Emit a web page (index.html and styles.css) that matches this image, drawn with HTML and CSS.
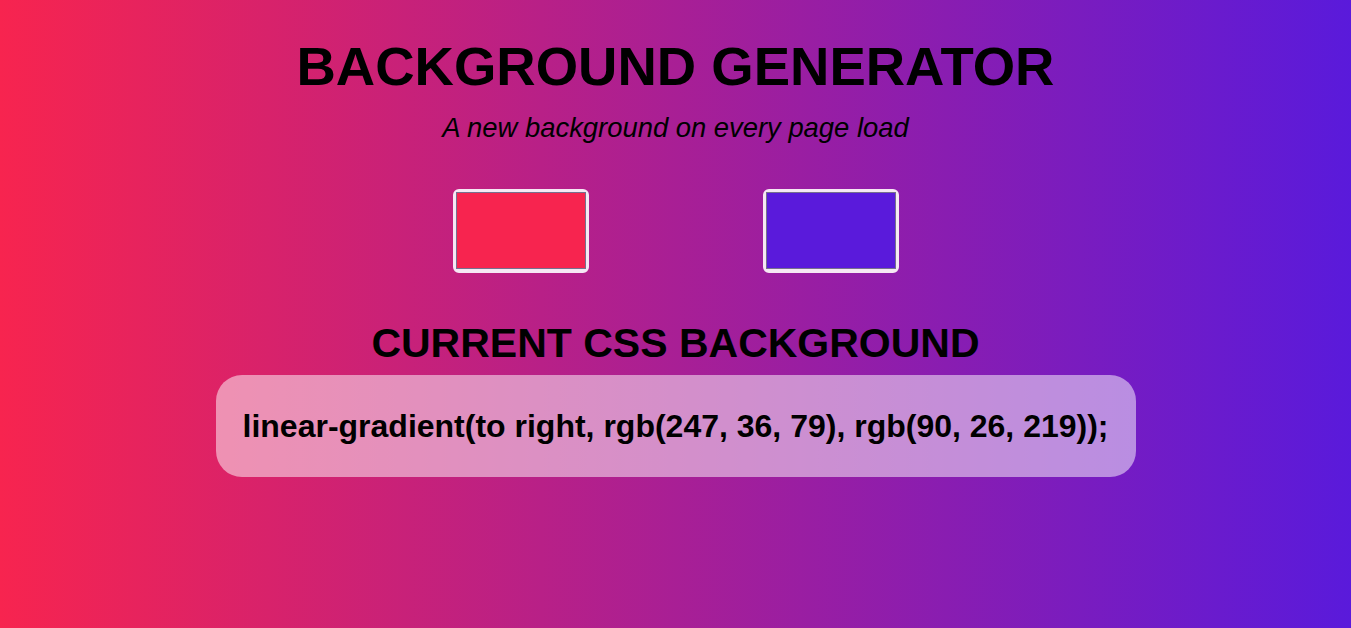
FILE: index.html
```html
<!DOCTYPE html>
<html>
<head>
<meta charset="utf-8">
<title>Background Generator</title>
<link rel="stylesheet" href="styles.css">
</head>
<body>
<main class="page">
  <h1 class="title">BACKGROUND GENERATOR</h1>
  <p class="subtitle">A new background on every page load</p>
  <div class="pickers">
    <div class="picker"><div class="swatch swatch-a"></div></div>
    <div class="picker"><div class="swatch swatch-b"></div></div>
  </div>
  <h2 class="heading">CURRENT CSS BACKGROUND</h2>
  <div class="code">linear-gradient(to right, rgb(247, 36, 79), rgb(90, 26, 219));</div>
</main>
</body>
</html>
```
FILE: styles.css
```css
html, body {
  margin: 0;
  height: 100%;
}
body {
  background: linear-gradient(to right, rgb(247, 36, 79), rgb(90, 26, 219));
  font-family: "Liberation Sans", Arial, sans-serif;
  color: #000;
}
.page {
  display: flex;
  flex-direction: column;
  align-items: center;
  padding-top: 35px;
}
.title {
  margin: 0;
  font-size: 54.5px;
  line-height: 64px;
  font-weight: bold;
}
.subtitle {
  margin: 13px 0 0;
  font-size: 27.4px;
  line-height: 32px;
  font-style: italic;
}
.pickers {
  display: flex;
  gap: 174px;
  margin-top: 45px;
}
.picker {
  width: 136px;
  height: 84px;
  box-sizing: border-box;
  border: 3px solid #f6e8f4;
  border-bottom-width: 4px;
  border-radius: 6px;
  background: #f6e8f4;
  display: flex;
}
.swatch {
  flex: 1;
  border: 1px solid #76708e;
}
.swatch-a { background: rgb(247, 36, 79); }
.swatch-b { background: rgb(90, 26, 219); }
.heading {
  margin: 46px 0 0;
  font-size: 41px;
  line-height: 48px;
  font-weight: bold;
}
.code {
  margin-top: 8px;
  width: 920px;
  height: 102px;
  box-sizing: border-box;
  border-radius: 26px;
  background: rgba(255, 255, 255, 0.5);
  display: flex;
  align-items: center;
  justify-content: center;
  font-size: 32px;
  font-weight: bold;
}
```
